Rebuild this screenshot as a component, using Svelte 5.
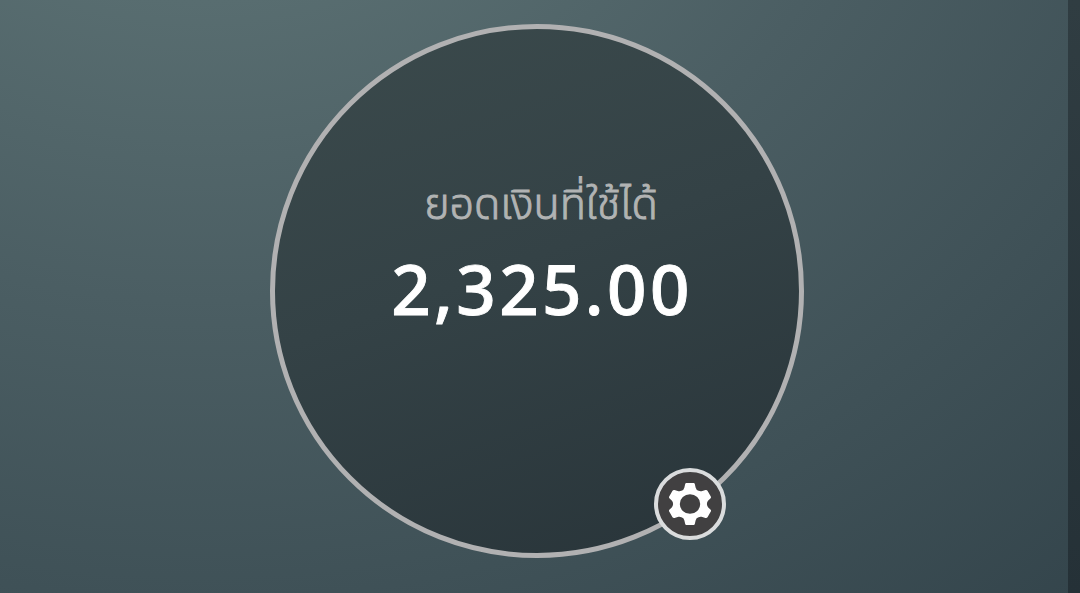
<script lang="ts">
  export let label = 'ยอดเงินที่ใช้ได้';
  export let balance = 2325;

  $: amount = balance.toLocaleString('en-US', { minimumFractionDigits: 2 });
</script>

<main class="screen">
  <div class="page">
    <section class="dial">
      <div class="label">{label}</div>
      <div class="amount">{amount}</div>
      <button class="settings" aria-label="Settings">
        <svg viewBox="-26 -26 52 52" width="52" height="52">
          <path
            fill="#fff"
            fill-rule="evenodd"
            d="M-3.600-21H3.600Q4.600-21 4.800-20L5.600-16.500Q6.200-13.800 8.600-13.200Q10-12.500 11.500-12.800L15.500-14Q16.800-14.300 17.500-13.300L20.800-7.600Q21.400-6.500 20.400-5.600L18-3.200Q15.800 0 18 3.200L20.400 5.600Q21.400 6.500 20.800 7.600L17.500 13.300Q16.800 14.300 15.500 14L11.500 12.800Q10 12.500 8.600 13.200Q6.200 13.800 5.600 16.500L4.800 20Q4.600 21 3.600 21H-3.600Q-4.600 21-4.800 20L-5.600 16.500Q-6.200 13.800-8.600 13.200Q-10 12.500-11.500 12.800L-15.500 14Q-16.800 14.300-17.500 13.300L-20.800 7.600Q-21.400 6.500-20.400 5.600L-18 3.200Q-15.800 0-18-3.200L-20.400-5.600Q-21.400-6.500-20.800-7.600L-17.500-13.300Q-16.800-14.300-15.500-14L-11.500-12.800Q-10-12.500-8.600-13.200Q-6.200-13.800-5.600-16.500L-4.800-20Q-4.600-21-3.600-21ZM-10.200 0a10.200 9.800 0 1 0 20.400 0a10.200 9.800 0 1 0-20.400 0Z"
          />
        </svg>
      </button>
    </section>
  </div>
  <div class="edge"></div>
</main>

<style>
  :global(body) { margin: 0; }
  .screen {
    display: flex;
    height: 593px;
    overflow: hidden;
    font-family: "Noto Sans Thai", "Noto Sans", sans-serif;
  }
  .page {
    flex: 1;
    padding: 24px 0 0 270px;
    background: radial-gradient(1392px 1200px at 200px -300px, #586d70 25%, #4b5e63 50%, #3f5157 75%, #33444b 100%);
  }
  .edge { width: 12px; background: linear-gradient(#303d42, #253137); }
  .dial {
    position: relative;
    box-sizing: border-box;
    width: 534px;
    height: 534px;
    padding-top: 143px;
    border: 5px solid #b1b1b2;
    border-radius: 50%;
    background: linear-gradient(160deg, #3b4a4c, #344246 45%, #29353a 95%);
    text-align: center;
    white-space: nowrap;
  }
  .label {
    height: 68px;
    padding-left: 8px;
    color: #b1b3b3;
    font-size: 43px;
    font-weight: 300;
    line-height: 68px;
    -webkit-text-stroke: 0.9px #b1b3b3;
  }
  .amount {
    margin-top: 9px;
    padding-left: 10px;
    color: #fff;
    font-size: 69px;
    font-weight: 500;
    line-height: 90px;
    letter-spacing: 3.4px;
    -webkit-text-stroke: 0.9px #fff;
  }
  .settings {
    display: flex;
    position: absolute;
    left: 379px;
    top: 439px;
    box-sizing: border-box;
    width: 72px;
    height: 72px;
    padding: 0;
    align-items: center;
    justify-content: center;
    border: 4px solid #dadcdd;
    border-radius: 50%;
    background: #414041;
  }
  .settings svg { flex: none; }
</style>
